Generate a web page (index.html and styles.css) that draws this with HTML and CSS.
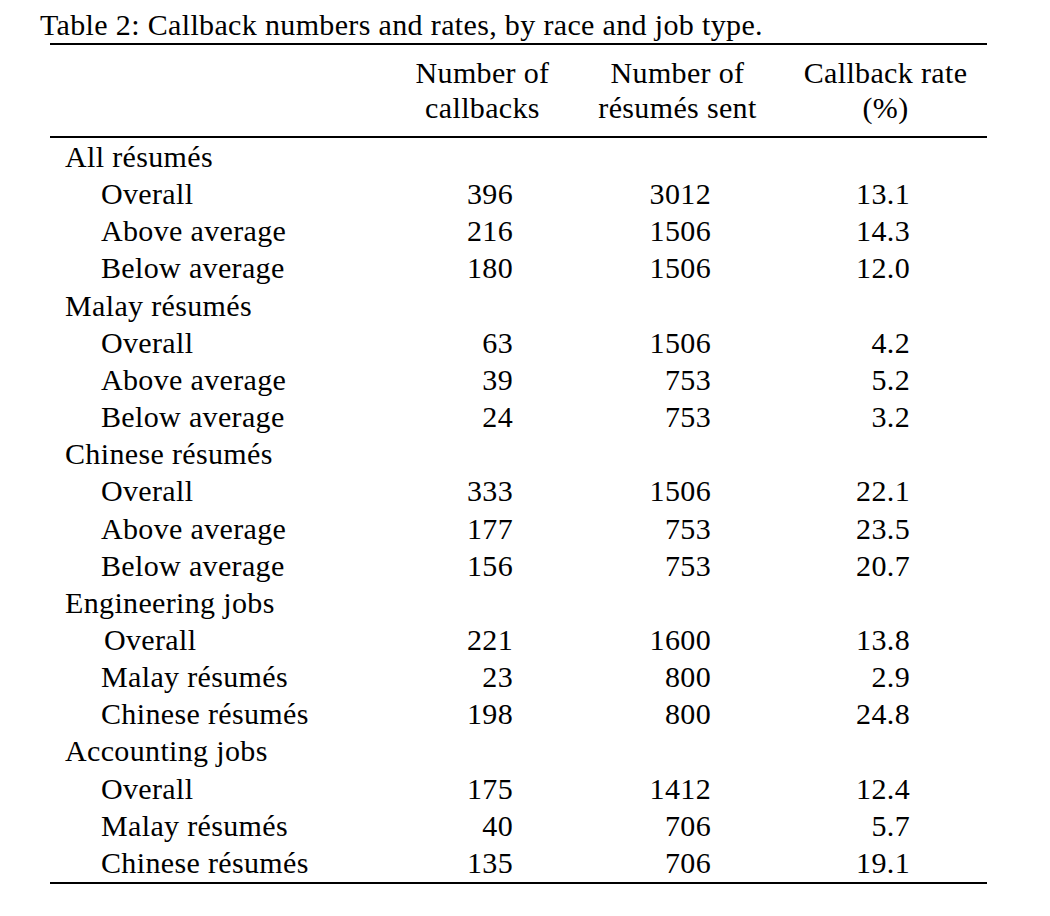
FILE: index.html
```html
<!DOCTYPE html>
<html lang="en">
<head>
<meta charset="utf-8">
<title>Table 2</title>
<link rel="stylesheet" href="styles.css">
</head>
<body>
<div class="page">
  <div class="caption">Table 2: Callback numbers and rates, by race and job type.</div>
  <div class="table">
    <div class="head">
      <div class="hcell"></div>
      <div class="hcell c1">Number of<br>callbacks</div>
      <div class="hcell c2">Number of<br>résumés sent</div>
      <div class="hcell c3">Callback rate<br>(%)</div>
    </div>
    <div class="tbody">
      <div class="row"><div class="label group">All résumés</div><div class="num c1"></div><div class="num c2"></div><div class="num c3"></div></div>
      <div class="row"><div class="label sub">Overall</div><div class="num c1">396</div><div class="num c2">3012</div><div class="num c3">13.1</div></div>
      <div class="row"><div class="label sub">Above average</div><div class="num c1">216</div><div class="num c2">1506</div><div class="num c3">14.3</div></div>
      <div class="row"><div class="label sub">Below average</div><div class="num c1">180</div><div class="num c2">1506</div><div class="num c3">12.0</div></div>
      <div class="row"><div class="label group">Malay résumés</div><div class="num c1"></div><div class="num c2"></div><div class="num c3"></div></div>
      <div class="row"><div class="label sub">Overall</div><div class="num c1">63</div><div class="num c2">1506</div><div class="num c3">4.2</div></div>
      <div class="row"><div class="label sub">Above average</div><div class="num c1">39</div><div class="num c2">753</div><div class="num c3">5.2</div></div>
      <div class="row"><div class="label sub">Below average</div><div class="num c1">24</div><div class="num c2">753</div><div class="num c3">3.2</div></div>
      <div class="row"><div class="label group">Chinese résumés</div><div class="num c1"></div><div class="num c2"></div><div class="num c3"></div></div>
      <div class="row"><div class="label sub">Overall</div><div class="num c1">333</div><div class="num c2">1506</div><div class="num c3">22.1</div></div>
      <div class="row"><div class="label sub">Above average</div><div class="num c1">177</div><div class="num c2">753</div><div class="num c3">23.5</div></div>
      <div class="row"><div class="label sub">Below average</div><div class="num c1">156</div><div class="num c2">753</div><div class="num c3">20.7</div></div>
      <div class="row"><div class="label group">Engineering jobs</div><div class="num c1"></div><div class="num c2"></div><div class="num c3"></div></div>
      <div class="row"><div class="label sub sub-shift">Overall</div><div class="num c1">221</div><div class="num c2">1600</div><div class="num c3">13.8</div></div>
      <div class="row"><div class="label sub">Malay résumés</div><div class="num c1">23</div><div class="num c2">800</div><div class="num c3">2.9</div></div>
      <div class="row"><div class="label sub">Chinese résumés</div><div class="num c1">198</div><div class="num c2">800</div><div class="num c3">24.8</div></div>
      <div class="row"><div class="label group">Accounting jobs</div><div class="num c1"></div><div class="num c2"></div><div class="num c3"></div></div>
      <div class="row"><div class="label sub">Overall</div><div class="num c1">175</div><div class="num c2">1412</div><div class="num c3">12.4</div></div>
      <div class="row"><div class="label sub">Malay résumés</div><div class="num c1">40</div><div class="num c2">706</div><div class="num c3">5.7</div></div>
      <div class="row"><div class="label sub">Chinese résumés</div><div class="num c1">135</div><div class="num c2">706</div><div class="num c3">19.1</div></div>
    </div>
  </div>
</div>
</body>
</html>
```

FILE: styles.css
```css
html, body {
  margin: 0;
  padding: 0;
  background: #ffffff;
}

body {
  font-family: "Liberation Serif", "Times New Roman", Times, serif;
  font-size: 30px;
  letter-spacing: 0.35px;
  color: #000000;
}

.page {
  padding: 7px 0 0 40px;
}

.caption {
  line-height: 36px;
  white-space: nowrap;
}

.table {
  margin-left: 10px;
  width: 937px;
  border-top: 2px solid #000;
  border-bottom: 2px solid #000;
  padding-bottom: 1px;
}

.head,
.row {
  display: grid;
  grid-template-columns: 350px 165px 225px 197px;
}

.head {
  padding: 10.4px 0 10.6px;
  border-bottom: 2px solid #000;
  line-height: 35px;
}

.hcell {
  text-align: center;
  white-space: nowrap;
}

.hcell.c3 {
  padding-right: 6px;
}

.row {
  line-height: 37.16px;
  white-space: nowrap;
}

.label.group {
  padding-left: 15px;
}

.label.sub {
  padding-left: 51px;
}

.label.sub-shift {
  padding-left: 54px;
}

.num {
  text-align: right;
}

.num.c1 {
  padding-right: 52px;
}

.num.c2 {
  padding-right: 79px;
}

.num.c3 {
  padding-right: 77px;
}
```
